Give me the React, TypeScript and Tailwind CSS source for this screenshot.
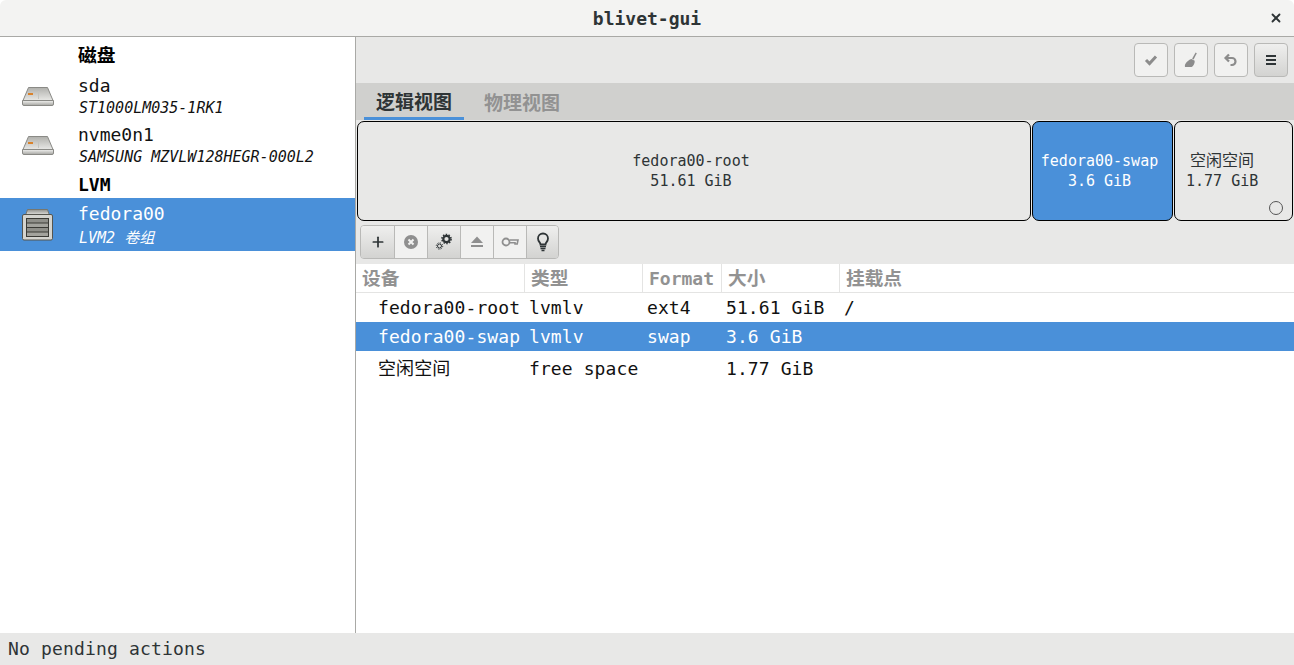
import React from 'react';
import { X, Plus } from 'lucide-react';

const mono = 'font-["DejaVu_Sans_Mono","Noto_Sans_CJK_SC",monospace]';

// Hard disk drawing from the sidebar
const DiskIcon = () => (
  <svg width="32" height="32" viewBox="0 0 32 32" className="shrink-0">
    <defs>
      <linearGradient id="diskTop" x1="0" y1="0" x2="0" y2="1">
        <stop offset="0" stopColor="#b0b0ac" />
        <stop offset="1" stopColor="#ececea" />
      </linearGradient>
      <linearGradient id="diskEdge" x1="0" y1="0" x2="0" y2="1">
        <stop offset="0" stopColor="#f2f2f0" />
        <stop offset="1" stopColor="#a5a5a1" />
      </linearGradient>
    </defs>
    <path d="M6.500 6.500h19l5.500 13v1h-30v-1z" fill="url(#diskTop)" stroke="#8a8a86" strokeWidth="1" />
    <path d="M.5 19.500h31v3.500a1.500 1.500 0 0 1-1.500 1.500h-28a1.500 1.500 0 0 1-1.500-1.500z" fill="url(#diskEdge)" stroke="#8a8a86" strokeWidth="1" />
    <rect x="6" y="12" width="5" height="2" fill="#d9822b" />
    <rect x="16" y="10" width="1" height="8" fill="#c4c4c0" />
  </svg>
);

// Volume group drawing for the selected row
const GroupIcon = () => (
  <svg width="32" height="32" viewBox="0 0 32 32" className="shrink-0">
    <defs>
      <linearGradient id="vgLid" x1="0" y1="0" x2="0" y2="1">
        <stop offset="0" stopColor="#8f8f8a" />
        <stop offset="1" stopColor="#ecece9" />
      </linearGradient>
    </defs>
    <path d="M3.500 6.500l2-6h20l2 6z" fill="url(#vgLid)" stroke="#77776f" />
    <rect x=".5" y="5.500" width="30" height="25.500" rx="1.500" fill="#d4d4cf" stroke="#55554f" />
    <rect x="4" y="9" width="23" height="19" fill="#3a3a35" />
    <rect x="5" y="10" width="21" height="3.500" fill="#8f8f89" />
    <rect x="5" y="14.500" width="21" height="3.500" fill="#a3a39d" />
    <rect x="5" y="19" width="21" height="3.500" fill="#8f8f89" />
    <rect x="5" y="23.500" width="21" height="3.500" fill="#a3a39d" />
  </svg>
);

const CheckIcon = () => (
  <svg width="14" height="14" viewBox="0 0 14 14" fill="none" stroke="#8c8c8c" strokeWidth="3">
    <path d="M2 7l3.500 3.500L12 3.500" />
  </svg>
);

const BroomIcon = () => (
  <svg width="16" height="16" viewBox="0 0 16 16" fill="#8c8c8c">
    <path d="M12.600 .5l1.200.7-3.200 6.300-1.500-.8z" />
    <path d="M8.500 7l3.200 1.700c.2 2.700-1.300 5.300-3 6.300H2c-.900-2.600 2.200-6.700 6.500-8z" />
  </svg>
);

const UndoIcon = () => (
  <svg width="16" height="16" viewBox="0 0 16 16" fill="none" stroke="#8c8c8c" strokeWidth="2.200">
    <path d="M6 2.500L2.500 6 6 9.500" />
    <path d="M3 6h6a3.500 3.500 0 0 1 0 7H7.500" />
  </svg>
);

const GearsIcon = () => (
  <svg width="18" height="18" viewBox="0 0 18 18" fill="none" stroke="#2e3436">
    <circle cx="11.500" cy="6" r="3.200" strokeWidth="2.200" />
    <circle cx="11.500" cy="6" r="4.600" strokeWidth="1.500" strokeDasharray="1.500 1.400" />
    <circle cx="4.500" cy="13" r="2" strokeWidth="1" />
    <circle cx="4.500" cy="13" r="3.200" strokeWidth="1" strokeDasharray="1.200 1.300" />
  </svg>
);

const RemoveIcon = () => (
  <svg width="16" height="16" viewBox="0 0 16 16">
    <circle cx="8" cy="8" r="7" fill="#8f8f8f" />
    <path d="M5.500 5.500l5 5M10.500 5.500l-5 5" stroke="#f2f2f1" strokeWidth="2" />
  </svg>
);

const EjectIcon = () => (
  <svg width="16" height="16" viewBox="0 0 16 16" fill="#8f8f8f">
    <path d="M8 2.500l6 6.500H2z" />
    <rect x="2" y="11" width="12" height="2" />
  </svg>
);

const KeyIcon = () => (
  <svg width="18" height="16" viewBox="0 0 18 16" fill="none" stroke="#8f8f8f">
    <circle cx="5" cy="8" r="3.500" strokeWidth="1.800" />
    <path d="M8.500 6h8.500l-.8 4h-2.200v-1.200h-5.500" strokeWidth="1.600" />
  </svg>
);

const BulbIcon = () => (
  <svg width="16" height="20" viewBox="0 0 16 20" fill="none" stroke="#2e3436">
    <path d="M5.500 12.500c0-2-2.500-3-2.500-6a5 5 0 0 1 10 0c0 3-2.500 4-2.500 6z" strokeWidth="1.800" />
    <path d="M5 14.500h6M5.500 16.500h5M6.500 18.500h3" strokeWidth="1.300" />
  </svg>
);

const MenuIcon = () => (
  <div className="flex flex-col gap-[2px]">
    <div className="w-[10px] h-[2px] bg-[#2e3436]" />
    <div className="w-[10px] h-[2px] bg-[#2e3436]" />
    <div className="w-[10px] h-[2px] bg-[#2e3436]" />
  </div>
);

const raised = 'bg-gradient-to-b from-[#efefee] to-[#d3d3d1]';
const flat = 'bg-[#f1f1f0]';

const HeaderButton = ({ active, children }: { active?: boolean; children: React.ReactNode }) => (
  <div className={`w-[34px] h-[34px] rounded-[4px] border border-[#b9b9b7] flex items-center justify-center ${active ? raised : flat}`}>
    {children}
  </div>
);

const actions = [
  { icon: <Plus size={16} strokeWidth={2.600} color="#2e3436" />, active: true, w: 'w-[33px]' },
  { icon: <RemoveIcon />, active: false, w: 'w-[33px]' },
  { icon: <GearsIcon />, active: true, w: 'w-[33px]' },
  { icon: <EjectIcon />, active: false, w: 'w-[33px]' },
  { icon: <KeyIcon />, active: false, w: 'w-[33px]' },
  { icon: <BulbIcon />, active: true, w: 'w-[32px]' },
];

const rows = [
  { name: 'fedora00-root', type: 'lvmlv', format: 'ext4', size: '51.61 GiB', mount: '/', selected: false, h: 'h-[29px]' },
  { name: 'fedora00-swap', type: 'lvmlv', format: 'swap', size: '3.6 GiB', mount: '', selected: true, h: 'h-[29px]' },
  { name: '空闲空间', type: 'free space', format: '', size: '1.77 GiB', mount: '', selected: false, h: 'h-[35px]' },
];

const App: React.FC = () => {
  return (
    <div className={`w-[1294px] h-[665px] flex flex-col overflow-hidden bg-white text-[18px] text-[#111] ${mono}`}>
      {/* Title bar */}
      <div className="h-[37px] shrink-0 relative flex items-center justify-center rounded-t-[6px] bg-[#f3f3f2] border-b border-[#a9a9a6]">
        <span className="font-bold text-[18px] text-[#2e3436] pt-[1px]">blivet-gui</span>
        <X size={14} strokeWidth={3.200} color="#2e3436" className="absolute right-[11px] top-[11px]" />
      </div>

      <div className="flex-1 flex min-h-0">
        {/* Sidebar */}
        <div className="w-[356px] shrink-0 border-r border-[#a9a9a6] bg-white">
          <div className="h-[35px] pl-[78px] pt-[3px] flex items-center font-bold text-[18.700px] text-black">磁盘</div>
          <div className="h-[49px] flex items-center pl-[22px] gap-[25px]">
            <DiskIcon />
            <div className="leading-[23px]">
              <div className="-ml-[1px]">sda</div>
              <div className="italic text-[15px]">ST1000LM035-1RK1</div>
            </div>
          </div>
          <div className="h-[49px] flex items-center pl-[22px] gap-[25px]">
            <DiskIcon />
            <div className="leading-[23px]">
              <div className="-ml-[1px]">nvme0n1</div>
              <div className="italic text-[15px]">SAMSUNG MZVLW128HEGR-000L2</div>
            </div>
          </div>
          <div className="h-[28px] pl-[78px] flex items-center font-bold text-black">LVM</div>
          <div className="h-[53px] flex items-center pl-[22px] gap-[25px] bg-[#4a90d9] text-white">
            <GroupIcon />
            <div className="leading-[25px] pt-[2px]">
              <div className="-ml-[1px]">fedora00</div>
              <div className="italic text-[15px]">LVM2 卷组</div>
            </div>
          </div>
        </div>

        {/* Main pane */}
        <div className="flex-1 min-w-0 flex flex-col bg-white">
          <div className="h-[46px] shrink-0 bg-[#e8e8e7] flex items-center justify-end pl-2 pr-[6px] gap-[6px]">
            <HeaderButton><CheckIcon /></HeaderButton>
            <HeaderButton><BroomIcon /></HeaderButton>
            <HeaderButton><UndoIcon /></HeaderButton>
            <HeaderButton active><MenuIcon /></HeaderButton>
          </div>

          {/* Tabs */}
          <div className="h-[37px] shrink-0 bg-[#d0d0ce] flex items-stretch pl-[8px] font-bold text-[19px]">
            <div className="w-[100px] pt-[5px] flex items-center justify-center border-b-[3px] border-[#4a90d9] text-[#2e3436]">逻辑视图</div>
            <div className="w-[120px] pl-[20px] pt-[3px] flex items-center text-[#929292]">物理视图</div>
          </div>

          {/* Blocks */}
          <div className="h-[105px] shrink-0 bg-[#e8e8e7] flex items-start pt-[1px] pl-[1px] gap-[1px] text-[15px] leading-[20px] text-center text-[#2e3436]">
            <div className="w-[674px] h-[100px] pr-[6px] rounded-[7px] border border-black bg-[#e8e8e7] flex flex-col items-center justify-center">
              <div>fedora00-root</div>
              <div>51.61 GiB</div>
            </div>
            <div className="w-[141px] h-[100px] pr-[6px] rounded-[7px] border border-black bg-[#4a90d9] text-white flex flex-col items-center justify-center">
              <div>fedora00-swap</div>
              <div>3.6 GiB</div>
            </div>
            <div className="w-[119px] h-[100px] rounded-[7px] border border-black bg-[#e8e8e7] relative flex flex-col items-start justify-center pl-[11px]">
              <div className="pl-[4px] text-[16px]">空闲空间</div>
              <div>1.77 GiB</div>
              <div className="absolute right-[9px] bottom-[5px] w-[14px] h-[14px] rounded-full border border-[#555]" />
            </div>
          </div>

          {/* Action buttons */}
          <div className="h-[39px] shrink-0 bg-[#e8e8e7] flex items-start pl-[4px]">
            <div className="flex rounded-[4px] border border-[#b9b9b7] overflow-hidden h-[34px]">
              {actions.map((a, i) => (
                <div key={i} className={`${a.w} flex items-center justify-center ${i > 0 ? 'border-l border-[#b9b9b7]' : ''} ${a.active ? raised : flat}`}>
                  {a.icon}
                </div>
              ))}
            </div>
          </div>

          {/* Table */}
          <div className="grid grid-cols-[168px_118px_79px_118px_1fr] h-[29px] shrink-0 border-b border-[#e4e4e3] font-bold text-[#929292] items-center">
            <div className="pl-[6px] pt-[1px] text-[18.700px] h-full flex items-center">设备</div>
            <div className="pl-[6px] pt-[1px] text-[18.700px] h-full flex items-center border-l border-[#e4e4e3]">类型</div>
            <div className="pl-[6px] h-full pb-[1px] flex items-center border-l border-[#e4e4e3]">Format</div>
            <div className="pl-[6px] pt-[1px] text-[18.700px] h-full flex items-center border-l border-[#e4e4e3]">大小</div>
            <div className="pl-[6px] pt-[1px] text-[18.700px] h-full flex items-center border-l border-[#e4e4e3]">挂载点</div>
          </div>
          {rows.map(r => (
            <div key={r.name} className={`grid grid-cols-[168px_118px_79px_118px_1fr] items-center shrink-0 tracking-[0.1px] ${r.h} ${r.selected ? 'bg-[#4a90d9] text-white' : ''}`}>
              <div className="pl-[22px] whitespace-nowrap">{r.name}</div>
              <div className="pl-[5px] whitespace-nowrap">{r.type}</div>
              <div className="pl-[5px]">{r.format}</div>
              <div className="pl-[5px] whitespace-nowrap">{r.size}</div>
              <div className="pl-[5px]">{r.mount}</div>
            </div>
          ))}
        </div>
      </div>

      {/* Status bar */}
      <div className="h-[32px] shrink-0 bg-[#e8e8e7] flex items-center pl-[8px] pb-[1px] tracking-[0.17px] text-[#2e3436]">No pending actions</div>
    </div>
  );
};

export default App;
